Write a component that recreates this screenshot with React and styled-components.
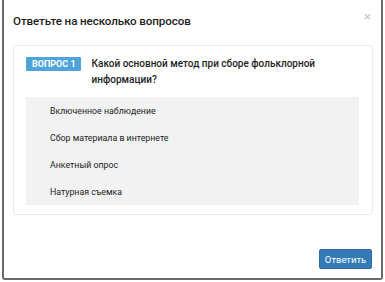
import React from "react";
import styled, { createGlobalStyle } from "styled-components";

const Global = createGlobalStyle`
  html, body { margin: 0; padding: 0; background: #ffffff; }
  body { font-family: Roboto, "Noto Sans", Arial, sans-serif; }
  * { box-sizing: border-box; }
`;

const Modal = styled.div`
  margin-left: 2px;
  width: 381px;
  height: 280px;
  border: 2px solid #6a6a6a;
  border-top: none;
  border-radius: 0 0 3px 3px;
  background: #ffffff;
  display: flex;
  flex-direction: column;
`;

const Header = styled.div`
  display: flex;
  align-items: center;
  justify-content: space-between;
  height: 40px;
  padding: 0 10px 0 9px;
`;

const Title = styled.h4`
  margin: 0;
  font-size: 11.6px;
  font-weight: 500;
  color: #1e1e1e;
  line-height: 20px;
  margin-top: 1px;
  letter-spacing: -0.1px;
`;

const Close = styled.span`
  font-size: 13px;
  color: #c8c8c8;
  line-height: 1;
  margin-top: -8px;
`;

const Body = styled.div`
  flex: 1;
  padding: 5px 8px 0 9px;
`;

const Card = styled.div`
  border: 1px solid #ececec;
  border-radius: 3px;
  padding: 10px 13px 9px 12px;
`;

const QuestionRow = styled.div`
  display: flex;
  align-items: flex-start;
  gap: 11px;
`;

const Badge = styled.span`
  flex: none;
  margin-top: 1px;
  background: #4ea5d9;
  color: #ffffff;
  font-size: 9px;
  font-weight: 700;
  line-height: 14px;
  padding: 0 5px 0 6px;
  border-radius: 1px;
`;

const QuestionText = styled.div`
  font-size: 10px;
  font-weight: 500;
  line-height: 16px;
  color: #1e1e1e;
`;

const Options = styled.div`
  margin-top: 9px;
  background: #f2f2f2;
  display: flex;
  flex-direction: column;
`;

const Option = styled.div`
  height: 27px;
  display: flex;
  align-items: center;
  padding-left: 24px;
  font-size: 8.8px;
  color: #222222;
`;

const Footer = styled.div`
  display: flex;
  justify-content: flex-end;
  padding: 0 9px 9px 0;
`;

const Button = styled.button`
  width: 53px;
  height: 20px;
  border: 1px solid #2e6da4;
  border-radius: 2px;
  background: #337ab7;
  color: #ffffff;
  font-family: Roboto, "Noto Sans", Arial, sans-serif;
  font-size: 9.5px;
  padding: 0;
  cursor: pointer;
`;

const options = [
  "Включенное наблюдение",
  "Сбор материала в интернете",
  "Анкетный опрос",
  "Натурная съемка",
];

export default function App() {
  return (
    <>
      <Global />
      <Modal>
        <Header>
          <Title>Ответьте на несколько вопросов</Title>
          <Close>×</Close>
        </Header>
        <Body>
          <Card>
            <QuestionRow>
              <Badge>ВОПРОС 1</Badge>
              <QuestionText>
                Какой основной метод при сборе фольклорной информации?
              </QuestionText>
            </QuestionRow>
            <Options>
              {options.map((o) => (
                <Option key={o}>{o}</Option>
              ))}
            </Options>
          </Card>
        </Body>
        <Footer>
          <Button>Ответить</Button>
        </Footer>
      </Modal>
    </>
  );
}
